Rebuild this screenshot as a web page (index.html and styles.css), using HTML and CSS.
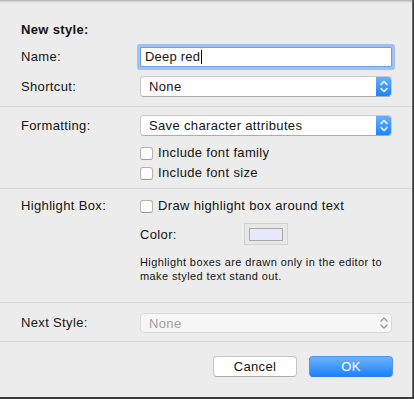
FILE: index.html
```html
<!DOCTYPE html>
<html>
<head>
<meta charset="utf-8">
<link rel="stylesheet" href="styles.css">
</head>
<body>
<div class="dialog">
  <section class="sec sec-1">
    <div class="heading">New style:</div>
    <div class="row row-name">
      <div class="label">Name:</div>
      <div class="field">Deep red<span class="caret"></span></div>
    </div>
    <div class="row row-shortcut">
      <div class="label">Shortcut:</div>
      <div class="popup"><span class="popup-text">None</span><span class="arrows"><svg width="16" height="21" viewBox="0 0 16 21"><path d="M5 8.5 L8 5.5 L11 8.5 M5 12.5 L8 15.5 L11 12.5" fill="none" stroke="#fff" stroke-width="1.4" stroke-linecap="round" stroke-linejoin="round"/></svg></span></div>
    </div>
  </section>
  <div class="sep"></div>
  <section class="sec sec-2">
    <div class="row row-format">
      <div class="label">Formatting:</div>
      <div class="popup"><span class="popup-text">Save character attributes</span><span class="arrows"><svg width="16" height="21" viewBox="0 0 16 21"><path d="M5 8.5 L8 5.5 L11 8.5 M5 12.5 L8 15.5 L11 12.5" fill="none" stroke="#fff" stroke-width="1.4" stroke-linecap="round" stroke-linejoin="round"/></svg></span></div>
    </div>
    <div class="row row-check first">
      <div class="label"></div>
      <label class="check"><span class="box"></span>Include font family</label>
    </div>
    <div class="row row-check">
      <div class="label"></div>
      <label class="check"><span class="box"></span>Include font size</label>
    </div>
  </section>
  <div class="sep"></div>
  <section class="sec sec-3">
    <div class="row row-check">
      <div class="label">Highlight Box:</div>
      <label class="check"><span class="box"></span>Draw highlight box around text</label>
    </div>
    <div class="row row-color">
      <div class="label"></div>
      <div class="color-line">
        <span class="color-label">Color:</span>
        <span class="well"><span class="swatch"></span></span>
      </div>
    </div>
    <div class="row row-help">
      <div class="label"></div>
      <p class="help">Highlight boxes are drawn only in the editor to make styled text stand out.</p>
    </div>
  </section>
  <div class="sep"></div>
  <section class="sec sec-4">
    <div class="row row-next">
      <div class="label">Next Style:</div>
      <div class="popup disabled"><span class="popup-text">None</span><span class="arrows"><svg width="16" height="20" viewBox="0 0 16 20"><path d="M5 8 L8 5 L11 8 M5 12 L8 15 L11 12" fill="none" stroke="#9a9a9a" stroke-width="1.3" stroke-linecap="round" stroke-linejoin="round"/></svg></span></div>
    </div>
  </section>
  <div class="sep"></div>
  <section class="sec sec-5">
    <button class="btn cancel">Cancel</button>
    <button class="btn ok">OK</button>
  </section>
</div>
</body>
</html>
```

FILE: styles.css
```css
html, body {
  margin: 0;
  padding: 0;
}
body {
  background: #3a3a3a;
  width: 414px;
  height: 399px;
  overflow: hidden;
  font-family: "Liberation Sans", Arial, sans-serif;
  font-size: 13px;
  letter-spacing: 0.35px;
  color: #141414;
}
.dialog {
  width: 413px;
  height: 397px;
  background: linear-gradient(#a9a9a9 0px, #d4d4d4 1.5px, #ececec 3px);
  border-right: 1px solid #6a6a6a;
  box-sizing: border-box;
  display: flex;
  flex-direction: column;
}
.sec {
  padding-left: 21px;
  padding-right: 20px;
  display: flex;
  flex-direction: column;
}
.sep {
  height: 1px;
  background: #d6d6d6;
}
.row {
  display: flex;
  align-items: center;
}
.label {
  width: 119px;
  flex: none;
  line-height: 16px;
}
.sec-1 {
  padding-top: 22px;
  height: 106px;
  box-sizing: border-box;
}
.heading {
  font-weight: bold;
  line-height: 16px;
  height: 16px;
}
.row-name {
  margin-top: 9px;
  height: 20px;
}
.field {
  width: 252px;
  height: 20px;
  box-sizing: border-box;
  background: #fff;
  border: 1px solid #6aa1e8;
  box-shadow: 0 0 0 3px #9dc2f2;
  border-radius: 1px;
  padding-left: 4px;
  line-height: 18px;
  font-size: 13px;
  letter-spacing: 0.2px;
  display: flex;
  align-items: center;
}
.caret {
  display: inline-block;
  width: 1px;
  height: 14px;
  background: #000;
  margin-left: 1px;
}
.row-shortcut {
  margin-top: 9px;
  height: 21px;
}
.popup {
  width: 252px;
  height: 21px;
  box-sizing: border-box;
  background: #fff;
  border: 1px solid #c9c9c9;
  border-bottom-color: #acacac;
  border-radius: 4px;
  display: flex;
  align-items: center;
  overflow: hidden;
}
.popup-text {
  flex: 1;
  padding-left: 8px;
  line-height: 19px;
}
.arrows {
  width: 16px;
  height: 21px;
  margin: -1px -1px -1px 0;
  background: linear-gradient(#6cb2fb, #1b7ffa);
  border-radius: 0 4px 4px 0;
  display: flex;
}
.sec-2 {
  padding-top: 8px;
  height: 81px;
  box-sizing: border-box;
}
.row-format {
  height: 21px;
}
.row-check {
  height: 20px;
}
.row-check.first {
  margin-top: 7px;
}
.check {
  display: flex;
  align-items: center;
  line-height: 16px;
}
.box {
  width: 13px;
  height: 13px;
  box-sizing: border-box;
  background: #fff;
  border: 1px solid #b3b3b3;
  border-bottom-color: #9c9c9c;
  border-radius: 3px;
  margin-right: 5px;
}
.sec-3 {
  padding-top: 7px;
  height: 113px;
  box-sizing: border-box;
}
.row-color {
  margin-top: 7px;
  height: 22px;
}
.color-line {
  display: flex;
  align-items: center;
}
.color-label {
  width: 104px;
}
.well {
  width: 44px;
  height: 22px;
  box-sizing: border-box;
  background: #e7e7e7;
  border: 1px solid #d2d2d2;
  display: flex;
  align-items: center;
  justify-content: center;
}
.swatch {
  width: 34px;
  height: 13px;
  box-sizing: border-box;
  background: #e8e8fc;
  border: 1px solid #a9a9a9;
}
.row-help {
  margin-top: 10px;
  align-items: flex-start;
}
.help {
  margin: 0;
  width: 252px;
  font-size: 11px;
  letter-spacing: 0.4px;
  line-height: 14px;
  color: #141414;
}
.sec-4 {
  padding-top: 10px;
  height: 38px;
  box-sizing: border-box;
}
.row-next {
  height: 20px;
}
.popup.disabled {
  height: 20px;
  background: #f6f6f6;
  border-color: #dadada;
  color: #9f9f9f;
}
.popup.disabled .arrows {
  background: none;
  height: 20px;
}
.sec-5 {
  flex-direction: row;
  justify-content: flex-end;
  padding-top: 14px;
  padding-right: 19px;
  gap: 12px;
}
.btn {
  width: 84px;
  height: 21px;
  box-sizing: border-box;
  font-family: "Liberation Sans", Arial, sans-serif;
  font-size: 13px;
  letter-spacing: 0.35px;
  border-radius: 4px;
  padding: 0;
  line-height: 19px;
}
.cancel {
  background: #fff;
  border: 1px solid #c6c6c6;
  border-bottom-color: #acacac;
  color: #141414;
}
.ok {
  background: linear-gradient(#6cb3fa, #1d82fb);
  border: 1px solid #4d96f6;
  border-bottom-color: #2a7af0;
  color: #fff;
}
```
